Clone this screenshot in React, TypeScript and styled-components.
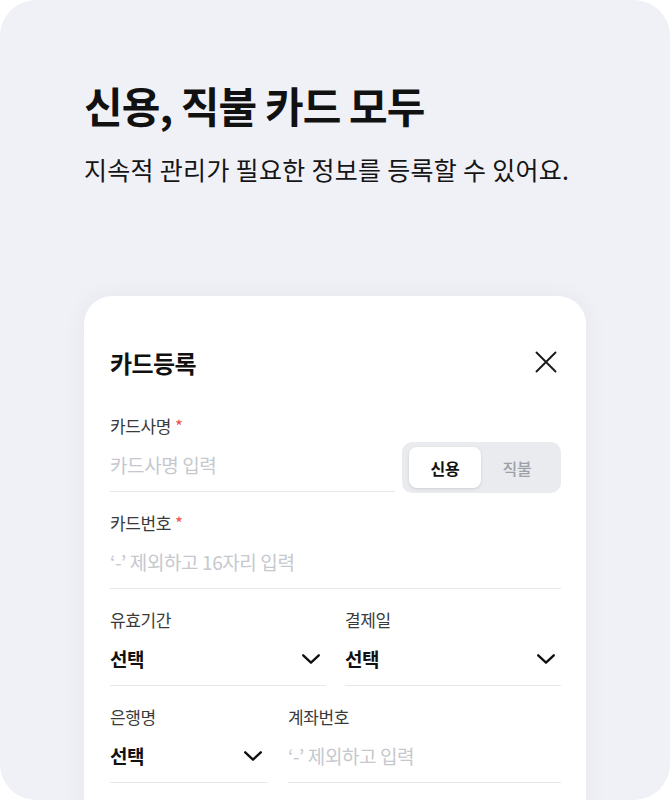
import React from "react";
import styled, { createGlobalStyle } from "styled-components";

const GlobalStyle = createGlobalStyle`
  html, body {
    margin: 0;
    padding: 0;
    background: #ffffff;
  }
  body {
    font-family: "Noto Sans CJK KR", "Noto Sans", sans-serif;
    color: #111111;
  }
  * {
    box-sizing: border-box;
  }
`;

const Panel = styled.section`
  width: 670px;
  height: 800px;
  border-radius: 36px;
  background: #f0f1f6;
  overflow: hidden;
  padding: 78px 0 0 84px;
`;

const Heading = styled.h1`
  margin: 0;
  font-size: 42px;
  line-height: 54px;
  font-weight: 700;
  letter-spacing: -0.9px;
  color: #111111;
`;

const SubTitle = styled.p`
  margin: 20px 0 0;
  font-size: 25px;
  line-height: 34px;
  font-weight: 400;
  letter-spacing: 0.3px;
  color: #151515;
`;

const Card = styled.div`
  width: 502px;
  margin-top: 110px;
  height: 600px;
  background: #ffffff;
  border-radius: 28px;
  padding: 49px 25px 0 26px;
  box-shadow: 0 0 24px rgba(40, 50, 80, 0.05);
`;

const CardHeader = styled.div`
  display: flex;
  align-items: center;
  justify-content: space-between;
  height: 34px;
  margin-bottom: 35px;
`;

const CardTitle = styled.h2`
  margin: 0;
  font-size: 24px;
  font-weight: 700;
  letter-spacing: -0.6px;
  color: #111111;
`;

const CloseButton = styled.button`
  border: 0;
  background: none;
  padding: 0;
  width: 24px;
  height: 24px;
  margin-right: 3px;
  display: flex;
  align-items: center;
  justify-content: center;
  cursor: pointer;
`;

const Form = styled.div`
  display: flex;
  flex-direction: column;
  gap: 19px;
`;

const Row = styled.div<{ $cols?: string; $gap?: number }>`
  display: grid;
  grid-template-columns: ${(p) => p.$cols || "1fr"};
  column-gap: ${(p) => p.$gap ?? 19}px;
  align-items: end;
`;

const Field = styled.div`
  display: flex;
  flex-direction: column;
  min-width: 0;
`;

const Label = styled.label`
  font-size: 17px;
  line-height: 24px;
  color: #3a3a3a;
  letter-spacing: -0.4px;
`;

const Required = styled.span`
  color: #f0524f;
  margin-left: 4px;
`;

const InputBox = styled.div`
  height: 54px;
  display: flex;
  align-items: center;
  justify-content: space-between;
  border-bottom: 1px solid #e6e8ec;
`;

const Placeholder = styled.span`
  font-size: 19px;
  color: #c5c8ce;
  letter-spacing: -0.4px;
`;

const SelectValue = styled.span`
  font-size: 19px;
  font-weight: 700;
  color: #111111;
  letter-spacing: -0.6px;
`;

const ChevronWrap = styled.span`
  display: flex;
  margin-right: 4px;
`;

const Segment = styled.div`
  display: flex;
  height: 51px;
  padding: 5px 7px;
  border-radius: 10px;
  background: #e9ebee;
  margin-bottom: -1px;
`;

const SegmentItem = styled.button<{ $active?: boolean }>`
  width: 72px;
  border: 0;
  border-radius: 8px;
  font-family: inherit;
  font-size: 16px;
  letter-spacing: -0.3px;
  font-weight: ${(p) => (p.$active ? 600 : 500)};
  color: ${(p) => (p.$active ? "#111111" : "#9ca1a9")};
  background: ${(p) => (p.$active ? "#ffffff" : "transparent")};
  box-shadow: ${(p) => (p.$active ? "0 1px 3px rgba(0,0,0,0.12)" : "none")};
`;

function Chevron() {
  return (
    <ChevronWrap>
      <svg width="22" height="22" viewBox="0 0 24 24" fill="none">
        <path d="M3.5 8l8.5 8 8.5-8" stroke="#111" strokeWidth="2.6" strokeLinecap="round" strokeLinejoin="round" />
      </svg>
    </ChevronWrap>
  );
}

function CloseIcon() {
  return (
    <svg width="24" height="24" viewBox="0 0 24 24" fill="none">
      <path d="M2.5 2.5L21.5 21.5M21.5 2.5L2.5 21.5" stroke="#1a1a1a" strokeWidth="1.9" strokeLinecap="round" />
    </svg>
  );
}

function Select({ label }: { label: string }) {
  return (
    <Field>
      <Label>{label}</Label>
      <InputBox>
        <SelectValue>선택</SelectValue>
        <Chevron />
      </InputBox>
    </Field>
  );
}

export default function App() {
  return (
    <>
      <GlobalStyle />
      <Panel>
        <Heading>신용, 직불 카드 모두</Heading>
        <SubTitle>지속적 관리가 필요한 정보를 등록할 수 있어요.</SubTitle>
        <Card>
          <CardHeader>
            <CardTitle>카드등록</CardTitle>
            <CloseButton aria-label="닫기">
              <CloseIcon />
            </CloseButton>
          </CardHeader>
          <Form>
            <Row $cols="1fr 159px" $gap={7}>
              <Field>
                <Label>
                  카드사명<Required>*</Required>
                </Label>
                <InputBox>
                  <Placeholder>카드사명 입력</Placeholder>
                </InputBox>
              </Field>
              <Segment>
                <SegmentItem $active>신용</SegmentItem>
                <SegmentItem>직불</SegmentItem>
              </Segment>
            </Row>
            <Row>
              <Field>
                <Label>
                  카드번호<Required>*</Required>
                </Label>
                <InputBox>
                  <Placeholder>‘-’ 제외하고 16자리 입력</Placeholder>
                </InputBox>
              </Field>
            </Row>
            <Row $cols="1fr 1fr">
              <Select label="유효기간" />
              <Select label="결제일" />
            </Row>
            <Row $cols="158px 1fr" $gap={20}>
              <Select label="은행명" />
              <Field>
                <Label>계좌번호</Label>
                <InputBox>
                  <Placeholder>‘-’ 제외하고 입력</Placeholder>
                </InputBox>
              </Field>
            </Row>
          </Form>
        </Card>
      </Panel>
    </>
  );
}
